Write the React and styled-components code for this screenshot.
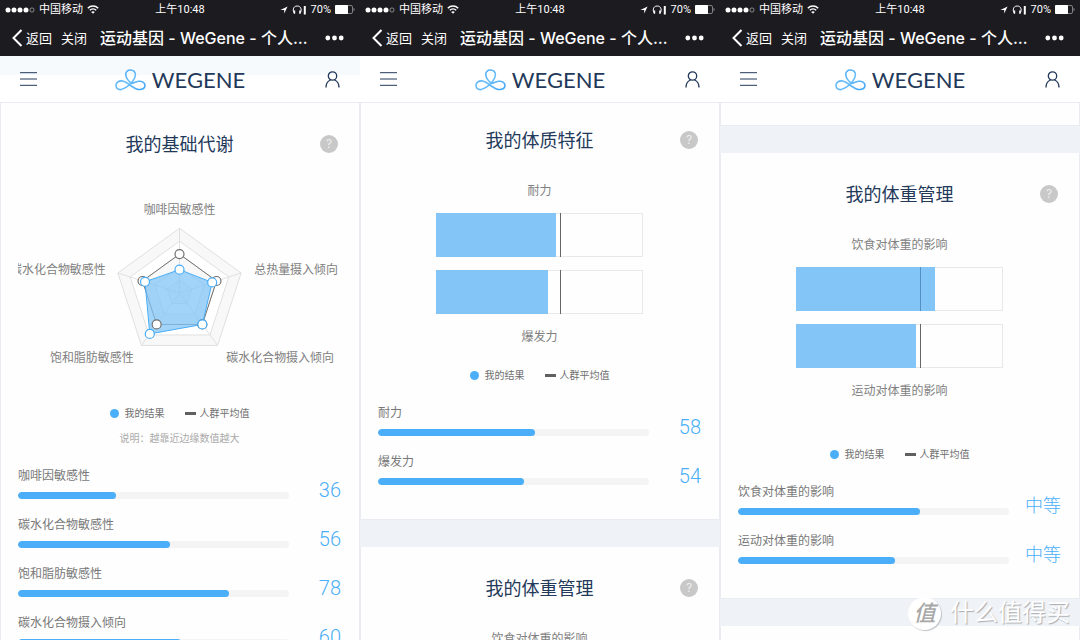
import { useId } from 'react'
import styled, { createGlobalStyle } from 'styled-components'

const GlobalStyle = createGlobalStyle`
	* {
		box-sizing: border-box;
	}
	body {
		margin: 0;
		background: #ffffff;
		font-family: Inter, 'Noto Sans CJK SC', sans-serif;
	}
	h1, h2, p, ul, dl, dd {
		margin: 0;
		padding: 0;
		font-weight: 400;
	}
	button {
		padding: 0;
		border: 0;
		background: none;
		font: inherit;
		color: inherit;
		cursor: pointer;
	}
`

const Board = styled.main`
	position: relative;
	display: grid;
	grid-template-columns: repeat(3, 1fr);
	height: 100vh;
	overflow: hidden;
`

const Phone = styled.section`
	display: flex;
	flex-direction: column;
	min-width: 0;
	overflow: hidden;
`

const TopBars = styled.div`
	flex: none;
	position: relative;
	z-index: 1;
`

const StatusBar = styled.div`
	display: grid;
	grid-template-columns: 1fr auto 1fr;
	align-items: center;
	height: 19px;
	padding: 0 5px;
	background: #1c1b20;
	color: #ffffff;
	font-family: Roboto, 'Noto Sans CJK SC', sans-serif;
	font-size: 11px;
	line-height: 19px;
`

const StatusGroup = styled.div`
	display: flex;
	align-items: center;
	justify-content: ${props => (props.$end ? 'flex-end' : 'flex-start')};
	gap: 4px;
`

const NavBar = styled.div`
	display: flex;
	align-items: center;
	height: 37px;
	padding: 0 16px 0 12px;
	background: #1c1b20;
	color: #ffffff;
`

const NavButton = styled.button`
	display: flex;
	align-items: center;
	flex: none;
	margin-right: 9px;
	font-size: 13px;
	line-height: 20px;
`

const NavTitle = styled.h1`
	flex: 1;
	min-width: 0;
	margin: 0 16px 0 4px;
	overflow: hidden;
	white-space: nowrap;
	text-overflow: ellipsis;
	font-size: 16px;
	font-weight: 500;
	line-height: 24px;
`

const SiteHeader = styled.header`
	display: grid;
	grid-template-columns: 1fr auto 1fr;
	align-items: center;
	height: 47px;
	padding: 0 20px;
	background: ${props => props.$tint || '#ffffff'};
	border-bottom: 1px solid #e9edf1;
`

const IconButton = styled.button`
	display: flex;
	justify-self: ${props => (props.$end ? 'end' : 'start')};
`

const Brand = styled.a`
	display: flex;
	align-items: center;
	gap: 6px;
	margin-top: 2px;
	color: #23395a;
	font-family: Lato, sans-serif;
	font-size: 22px;
	line-height: 24px;
	text-decoration: none;
`

const Feed = styled.div`
	display: flex;
	flex-direction: column;
	flex: 1;
	gap: 27px;
	min-height: 0;
	margin-top: ${props => props.$scrolled || 0}px;
	background: #eff3f7;
`

const Card = styled.article`
	flex: none;
	padding: 28px 18px 31px 17px;
	background: #fefefe;
	border: 1px solid #e9edf1;
	border-top-width: 0;
`

const CardTail = styled.div`
	flex: none;
	height: 23px;
	background: #fefefe;
	border: 1px solid #e9edf1;
	border-top-width: 0;
`

const CardHead = styled.div`
	display: grid;
	grid-template-columns: 1fr auto 1fr;
	align-items: start;
`

const CardTitle = styled.h2`
	grid-column: 2;
	color: #23395a;
	font-size: 18px;
	line-height: 28px;
`

const Help = styled.button`
	justify-self: end;
	width: 18px;
	height: 18px;
	margin: 4px 3px 0 0;
	border-radius: 50%;
	background: #c8c8c8;
	color: #eeeeee;
	font-size: 12px;
	line-height: 18px;
`

const Radar = styled.svg`
	display: block;
	width: 100%;
	height: 192px;
	margin-top: 38px;
	font-size: 12px;
	fill: #808080;
`

const BarChart = styled.div`
	display: flex;
	flex-direction: column;
	align-items: center;
	padding-top: 26px;
	color: #808080;
	font-size: 12px;
	line-height: 20px;
`

const BarPair = styled.div`
	display: grid;
	gap: 13px;
	width: 64%;
	margin: 12px 0 13px;
`

const Box = styled.div`
	position: relative;
	height: 44px;
	box-shadow: inset 0 0 0 1px #e8e8e8;
`

const BoxFill = styled.div`
	height: 100%;
	background: #83c5f7;
`

const BoxAverage = styled.div`
	position: absolute;
	top: 0;
	bottom: 0;
	left: 60%;
	width: 1px;
	background: ${props => (props.$covered ? '#5591c0' : '#666666')};
`

const Legend = styled.ul`
	display: flex;
	justify-content: center;
	gap: 20px;
	margin-top: ${props => props.$gap}px;
	list-style: none;
	color: #707070;
	font-size: 10px;
	line-height: 16px;
	li {
		display: flex;
		align-items: center;
	}
`

const Dot = styled.span`
	width: 9px;
	height: 9px;
	margin-right: 6px;
	border-radius: 50%;
	background: #4aaef8;
`

const Dash = styled.span`
	width: 11px;
	height: 3px;
	margin-right: 4px;
	background: #606060;
`

const Note = styled.p`
	margin-top: 9px;
	color: #aaaaaa;
	font-size: 10px;
	line-height: 16px;
	text-align: center;
`

const Scores = styled.dl`
	display: grid;
	gap: 13px;
	margin-top: 20px;
`

const ScoreRow = styled.div`
	display: grid;
	grid-template-columns: 1fr 52px;
	grid-template-rows: 20px 16px;
`

const ScoreName = styled.dt`
	color: #787878;
	font-size: 12px;
	line-height: 20px;
`

const ScoreValue = styled.dd`
	grid-column: 2;
	grid-row: 1 / span 2;
	align-self: end;
	color: #4aaef8;
	font-family: Roboto, 'Noto Sans CJK SC', sans-serif;
	font-size: ${props => (props.$word ? 18 : 20)}px;
	font-weight: 300;
	line-height: 24px;
	text-align: right;
`

const Track = styled.dd`
	height: 7px;
	margin-top: 6px;
	border-radius: 4px;
	background: #f4f4f4;
	overflow: hidden;
`

const TrackFill = styled.div`
	height: 100%;
	border-radius: 4px;
	background: #4aaef8;
`

const Watermark = styled.div`
	position: absolute;
	right: 10px;
	bottom: 10px;
	z-index: 2;
	display: flex;
	align-items: center;
	gap: 9px;
	color: #ffffff;
	font-size: 24px;
	line-height: 34px;
	text-shadow: 1px 1px 1px #a8acb0;
`

const Seal = styled.span`
	width: 33px;
	height: 33px;
	border-radius: 50%;
	background: #ffffff;
	box-shadow: 1px 1px 1px #c0c4c8;
	color: #a8a8a8;
	font-size: 22px;
	font-style: italic;
	font-weight: 500;
	line-height: 32px;
	text-align: center;
	text-shadow: none;
`

const axes = [
	{ label: '咖啡因敏感性', mine: 36, x: 162, y: 17, anchor: 'middle' },
	{ label: '总热量摄入倾向', mine: 53, x: 237, y: 77, anchor: 'start' },
	{ label: '碳水化合物摄入倾向', mine: 60, x: 209, y: 165, anchor: 'start' },
	{ label: '饱和脂肪敏感性', mine: 78, x: 116, y: 165, anchor: 'end' },
	{ label: '碳水化合物敏感性', mine: 56, x: 88, y: 77, anchor: 'end' },
]

const vertex = (i, value) => {
	const angle = (i * 2 * Math.PI) / 5
	const r = value * 0.65
	return [162 + r * Math.sin(angle), 96 - r * Math.cos(angle)]
}

const outline = values => values.map((value, i) => vertex(i, value).join()).join(' ')

function Markers({ values, color }) {
	return values.map((value, i) => {
		const [x, y] = vertex(i, value)
		return <circle key={i} cx={x} cy={y} r='4.5' fill='#ffffff' stroke={color} strokeWidth='1.2' />
	})
}

function RadarChart() {
	const mine = axes.map(axis => axis.mine)
	const average = axes.map(() => 60)
	return (
		<Radar viewBox='0 0 324 192' role='img' aria-label='我的基础代谢'>
			{[100, 80, 60, 40, 20].map((level, i) => (
				<polygon
					key={level}
					points={outline(Array(5).fill(level))}
					fill={i % 2 ? '#ffffff' : '#f8f8f8'}
					stroke='#e0e0e0'
				/>
			))}
			{axes.map((axis, i) => {
				const [x, y] = vertex(i, 100)
				return <line key={axis.label} x1='162' y1='96' x2={x} y2={y} stroke='#e0e0e0' />
			})}
			<polygon points={outline(average)} fill='none' stroke='#707070' />
			<polygon points={outline(mine)} fill='#83c5f7' fillOpacity='0.75' stroke='#4aaef8' />
			<Markers values={average} color='#707070' />
			<Markers values={mine} color='#4aaef8' />
			{axes.map(axis => (
				<text key={axis.label} x={axis.x} y={axis.y} textAnchor={axis.anchor}>
					{axis.label}
				</text>
			))}
		</Radar>
	)
}

function Bars({ top, bottom }) {
	return (
		<BarChart>
			<span>{top.label}</span>
			<BarPair>
				{[top, bottom].map(bar => (
					<Box key={bar.label}>
						<BoxFill style={{ width: `${bar.value}%` }} />
						<BoxAverage $covered={bar.value > 60} />
					</Box>
				))}
			</BarPair>
			<span>{bottom.label}</span>
		</BarChart>
	)
}

function ChartLegend({ gap }) {
	return (
		<Legend $gap={gap}>
			<li>
				<Dot />
				我的结果
			</li>
			<li>
				<Dash />
				人群平均值
			</li>
		</Legend>
	)
}

function ScoreList({ rows }) {
	return (
		<Scores>
			{rows.map(row => (
				<ScoreRow key={row.label}>
					<ScoreName>{row.label}</ScoreName>
					<ScoreValue $word={Boolean(row.text)}>{row.text || row.value}</ScoreValue>
					<Track>
						<TrackFill style={{ width: `${row.value}%` }} />
					</Track>
				</ScoreRow>
			))}
		</Scores>
	)
}

function Heading({ children }) {
	return (
		<CardHead>
			<CardTitle>{children}</CardTitle>
			<Help aria-label='帮助'>?</Help>
		</CardHead>
	)
}

function BarsCard({ title, rows, legendGap }) {
	return (
		<Card>
			<Heading>{title}</Heading>
			<Bars top={rows[0]} bottom={rows[1]} />
			<ChartLegend gap={legendGap} />
			<ScoreList rows={rows} />
		</Card>
	)
}

function Logo() {
	const id = useId()
	return (
		<svg width='31' height='22' viewBox='0 0 31 22' fill='none' strokeWidth='1.6'>
			<defs>
				<linearGradient id={id} x1='0' y1='0' x2='1' y2='1'>
					<stop offset='0' stopColor='#3aa3f5' />
					<stop offset='0.5' stopColor='#6cbefa' />
					<stop offset='1' stopColor='#3aa3f5' />
				</linearGradient>
			</defs>
			<path
				stroke={`url(#${id})`}
				d='M15.5 1C18.6 1 20.6 3 20.4 6 20 11 13 19 6 20.5 3 21 1 19 1 16.500 1 13.500 4 11.500 7.500 12 13 13 17 19 23 20.400 27 21 30 19.500 30 16.500 30 13.500 27 11.800 23.500 12.300 20.500 12.800 18.500 14.300 16.500 14.500 13.500 12 10.800 9 10.800 5.500 10.800 2.700 13 1 15.500 1z'
			/>
		</svg>
	)
}

function Screen({ tint, children }) {
	return (
		<Phone>
			<TopBars>
				<StatusBar>
					<StatusGroup>
						<svg width='30' height='6' viewBox='0 0 30 6' fill='#ffffff'>
							<circle cx='3' cy='3' r='2.5' />
							<circle cx='9' cy='3' r='2.5' />
							<circle cx='15' cy='3' r='2.5' />
							<circle cx='21' cy='3' r='2.5' />
							<circle cx='27' cy='3' r='2.1' fill='none' stroke='#b0b0b0' strokeWidth='0.7' />
						</svg>
						中国移动
						<svg width='12' height='9' viewBox='0 0 12 9' fill='none' stroke='#ffffff' strokeWidth='1.5'>
							<path d='M0.8 3.2a7.4 7.4 0 0 1 10.4 0M2.8 5.3a4.6 4.6 0 0 1 6.4 0' />
							<path d='M6 8.8 4.2 7a2.6 2.6 0 0 1 3.6 0z' fill='#ffffff' stroke='none' />
						</svg>
					</StatusGroup>
					<span>上午10:48</span>
					<StatusGroup $end>
						<svg width='8' height='8' viewBox='0 0 8 8' fill='#ffffff'>
							<path d='M7.6.4 4.2 7.6V3.9H.4z' />
						</svg>
						<svg width='15' height='10' viewBox='0 0 15 10' fill='none' stroke='#ffffff'>
							<path d='M2.6 8.6C.4 6 .7 1 5.2 1s4.8 5 2.6 7.6' />
							<path d='M2.4 5.5v3M8 5.5v3' strokeWidth='1.6' />
							<path d='M12.8 1v8.5' strokeWidth='2' />
						</svg>
						70%
						<svg width='20' height='9' viewBox='0 0 20 9'>
							<rect x='.5' y='.5' width='17' height='8' rx='1.5' fill='none' stroke='#808080' />
							<rect x='0' y='0' width='13' height='9' rx='1' fill='#ffffff' />
							<path d='M18.5 3v3c1.5-.5 1.5-2.5 0-3z' fill='#909090' />
						</svg>
					</StatusGroup>
				</StatusBar>
				<NavBar>
					<NavButton>
						<svg width='14' height='18' viewBox='0 0 14 18' fill='none' stroke='#ffffff' strokeWidth='2'>
							<path d='M9.5 1 1.5 9l8 8' />
						</svg>
						返回
					</NavButton>
					<NavButton>关闭</NavButton>
					<NavTitle>运动基因 - WeGene - 个人基因检测</NavTitle>
					<IconButton aria-label='更多'>
						<svg width='19' height='6' viewBox='0 0 19 6' fill='#ffffff'>
							<circle cx='2.8' cy='3' r='2.4' />
							<circle cx='9.5' cy='3' r='2.4' />
							<circle cx='16.2' cy='3' r='2.4' />
						</svg>
					</IconButton>
				</NavBar>
				<SiteHeader $tint={tint}>
					<IconButton aria-label='菜单'>
						<svg width='17' height='14' viewBox='0 0 17 14' stroke='#23395a'>
							<path d='M0 .7h17M0 7h17M0 13.3h17' />
						</svg>
					</IconButton>
					<Brand href='#'>
						<Logo />
						WEGENE
					</Brand>
					<IconButton $end aria-label='我的账户'>
						<svg width='15' height='17' viewBox='0 0 15 17' fill='none' stroke='#23395a' strokeWidth='1.3'>
							<circle cx='7.5' cy='5' r='4.2' />
							<path d='M1 16.5c0-4 2-6.5 4.5-7.5M14 16.5c0-4-2-6.5-4.5-7.5' />
						</svg>
					</IconButton>
				</SiteHeader>
			</TopBars>
			{children}
		</Phone>
	)
}

const metabolism = [
	{ label: '咖啡因敏感性', value: 36 },
	{ label: '碳水化合物敏感性', value: 56 },
	{ label: '饱和脂肪敏感性', value: 78 },
	{ label: '碳水化合物摄入倾向', value: 60 },
]

const physique = [
	{ label: '耐力', value: 58 },
	{ label: '爆发力', value: 54 },
]

const weight = [
	{ label: '饮食对体重的影响', value: 67, text: '中等' },
	{ label: '运动对体重的影响', value: 58, text: '中等' },
]

export default function App() {
	return (
		<Board>
			<GlobalStyle />
			<Screen tint='linear-gradient(#f6fafd 18px, #ffffff 20px)'>
				<Feed>
					<Card>
						<Heading>我的基础代谢</Heading>
						<RadarChart />
						<ChartLegend gap={16} />
						<Note>说明：越靠近边缘数值越大</Note>
						<ScoreList rows={metabolism} />
					</Card>
				</Feed>
			</Screen>
			<Screen>
				<Feed $scrolled={-4}>
					<BarsCard title='我的体质特征' rows={physique} legendGap={20} />
					<BarsCard title='我的体重管理' rows={weight} legendGap={45} />
				</Feed>
			</Screen>
			<Screen>
				<Feed>
					<CardTail />
					<BarsCard title='我的体重管理' rows={weight} legendGap={45} />
					<CardTail />
				</Feed>
			</Screen>
			<Watermark>
				<Seal>值</Seal>
				什么值得买
			</Watermark>
		</Board>
	)
}
